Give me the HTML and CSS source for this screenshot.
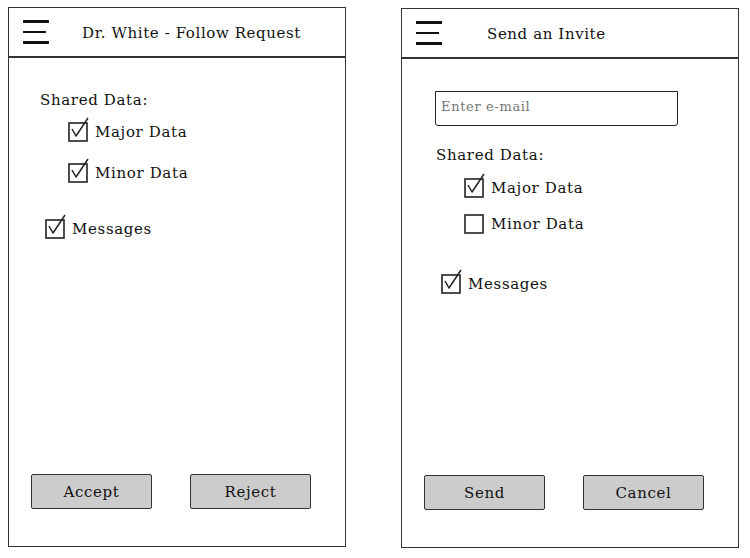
FILE: index.html
```html
<!DOCTYPE html>
<html>
<head>
<meta charset="utf-8">
<link rel="stylesheet" href="styles.css">
</head>
<body>
<div class="screens">
  <section class="panel panel-left">
    <header class="header">
      <div class="burger"><span></span><span class="short"></span><span></span></div>
      <h1 class="title title-left">Dr. White - Follow Request</h1>
    </header>
    <div class="content">
      <div class="row label l-shared">Shared Data:</div>
      <div class="row check indent l-major">
        <svg class="box" viewBox="0 0 20 20"><rect x="1" y="1" width="18" height="18"/><path d="M4 7 L8 14 L20 -4"/></svg>
        <span>Major Data</span>
      </div>
      <div class="row check indent l-minor">
        <svg class="box" viewBox="0 0 20 20"><rect x="1" y="1" width="18" height="18"/><path d="M4 7 L8 14 L20 -4"/></svg>
        <span>Minor Data</span>
      </div>
      <div class="row check msg l-msg">
        <svg class="box" viewBox="0 0 20 20"><rect x="1" y="1" width="18" height="18"/><path d="M4 7 L8 14 L20 -4"/></svg>
        <span>Messages</span>
      </div>
    </div>
    <div class="actions">
      <button class="btn">Accept</button>
      <button class="btn">Reject</button>
    </div>
  </section>

  <section class="panel panel-right">
    <header class="header">
      <div class="burger"><span></span><span class="short"></span><span></span></div>
      <h1 class="title title-right">Send an Invite</h1>
    </header>
    <div class="content">
      <div class="email">Enter e-mail</div>
      <div class="row label r-shared">Shared Data:</div>
      <div class="row check indent r-major">
        <svg class="box" viewBox="0 0 20 20"><rect x="1" y="1" width="18" height="18"/><path d="M4 7 L8 14 L20 -4"/></svg>
        <span>Major Data</span>
      </div>
      <div class="row check indent r-minor">
        <svg class="box" viewBox="0 0 20 20"><rect x="1" y="1" width="18" height="18"/></svg>
        <span>Minor Data</span>
      </div>
      <div class="row check msg r-msg">
        <svg class="box" viewBox="0 0 20 20"><rect x="1" y="1" width="18" height="18"/><path d="M4 7 L8 14 L20 -4"/></svg>
        <span>Messages</span>
      </div>
    </div>
    <div class="actions">
      <button class="btn">Send</button>
      <button class="btn">Cancel</button>
    </div>
  </section>
</div>
</body>
</html>
```

FILE: styles.css
```css
* { box-sizing: border-box; }
html, body { margin: 0; padding: 0; background: #fff; }
body {
  font-family: "DejaVu Serif", serif;
  color: #111;
  width: 750px;
  height: 558px;
  overflow: hidden;
}
.screens {
  display: flex;
  align-items: flex-start;
  padding: 7px 0 0 8px;
}
.panel {
  width: 338px;
  height: 540px;
  border: 1.5px solid #333;
  display: flex;
  flex-direction: column;
}
.panel-right {
  margin-left: 55px;
  margin-top: 1px;
}
.header {
  height: 50px;
  border-bottom: 2px solid #333;
  display: flex;
  align-items: center;
  flex: none;
}
.burger {
  margin-left: 14px;
  width: 26px;
  display: flex;
  flex-direction: column;
  gap: 8px;
}
.burger span {
  display: block;
  height: 2.5px;
  background: #111;
  width: 26px;
}
.burger span.short { width: 23px; }
.title {
  margin: 0;
  font-size: 15px;
  letter-spacing: 0.6px;
  font-weight: normal;
  padding-top: 1px;
}
.title-left { margin-left: 33px; }
.title-right { margin-left: 45px; }
.content {
  display: flex;
  flex-direction: column;
  font-size: 15px;
  letter-spacing: 0.65px;
}
.row {
  height: 20px;
  display: flex;
  align-items: center;
}
.check span { margin-left: 7px; }
.box {
  width: 20px;
  height: 20px;
  overflow: visible;
  flex: none;
}
.box rect { fill: none; stroke: #222; stroke-width: 1.6; }
.box path { fill: none; stroke: #222; stroke-width: 1.5; stroke-linejoin: round; }

.panel-left .content { padding-left: 31px; }
.panel-left .indent { margin-left: 28px; }
.panel-left .msg { margin-left: 5px; }
.l-shared { margin-top: 32px; }
.l-major { margin-top: 12px; }
.l-minor { margin-top: 21px; }
.l-msg { margin-top: 36px; }

.panel-right .content { padding-left: 33px; }
.email {
  margin-top: 32px;
  width: 243px;
  height: 35px;
  border: 1.5px solid #222;
  border-radius: 0 0 3px 3px;
  color: #777;
  font-size: 13px;
  letter-spacing: 0.65px;
  padding: 7px 0 0 5px;
}
.panel-right .label { margin-left: 1px; }
.panel-right .indent { margin-left: 29px; }
.panel-right .msg { margin-left: 6px; }
.r-shared { margin-top: 19px; }
.r-major { margin-top: 13px; }
.r-minor { margin-top: 16px; }
.r-msg { margin-top: 40px; }

.actions {
  margin-top: auto;
  padding: 0 0 37px 22px;
  display: flex;
  gap: 38px;
}
.btn {
  width: 121px;
  height: 35px;
  background: #ccc;
  border: 1.5px solid #333;
  border-radius: 2px;
  font-family: "DejaVu Serif", serif;
  font-size: 15px;
  letter-spacing: 0.65px;
  color: #111;
  padding: 0;
}
```
